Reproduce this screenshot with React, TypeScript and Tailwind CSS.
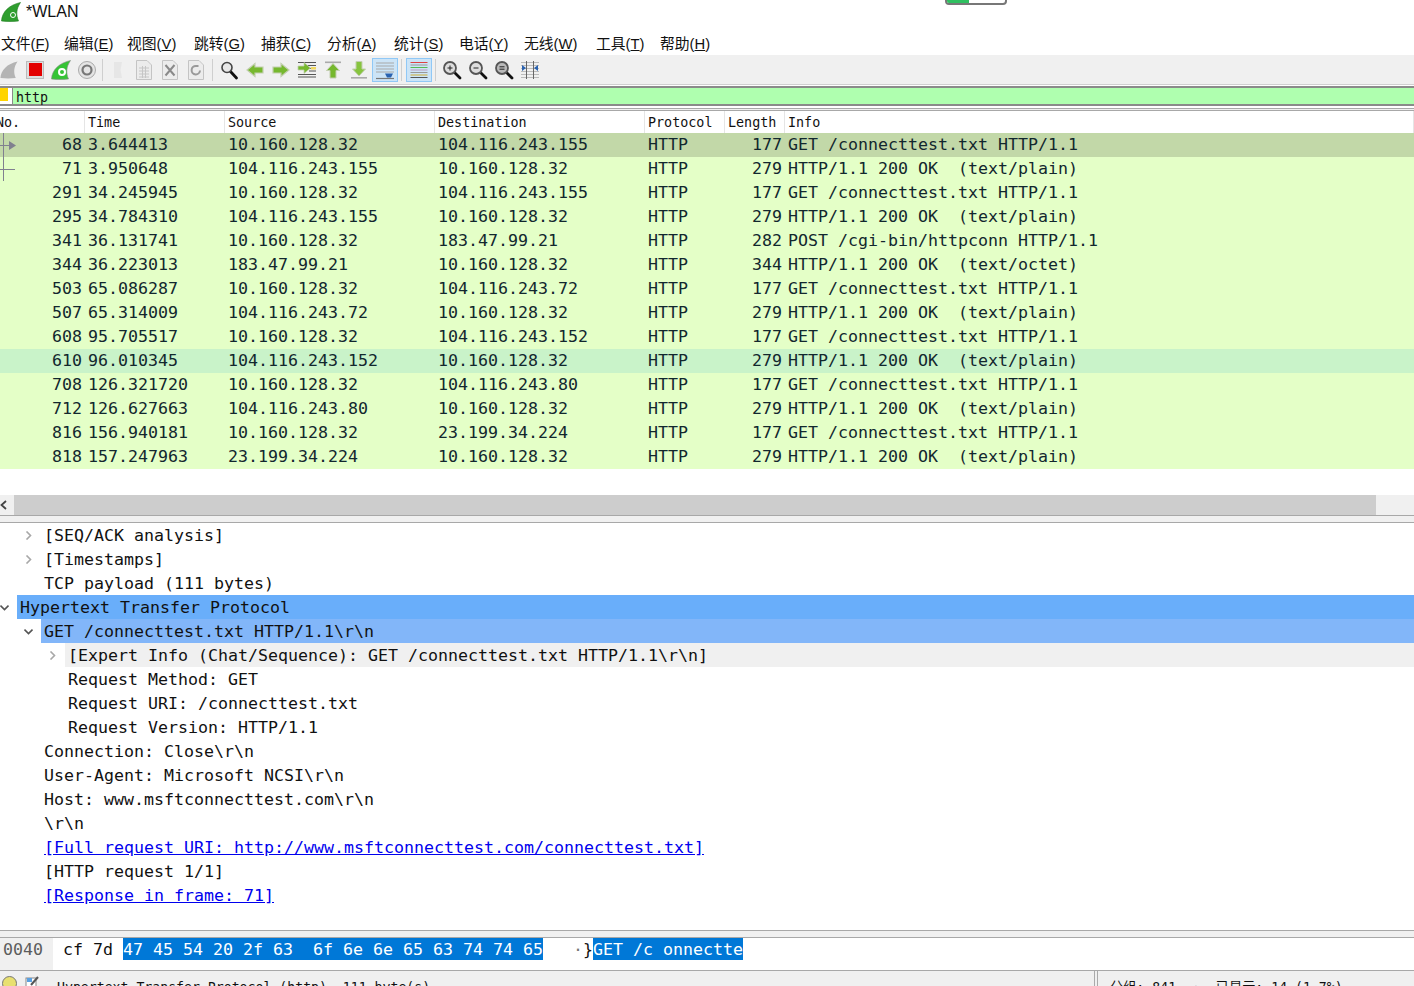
import type { ReactNode } from "react";

const mono = "font-['DejaVu_Sans_Mono','Liberation_Mono',monospace]";

const menus = [
  ["文件(", "F", 63],
  ["编辑(", "E", 63],
  ["视图(", "V", 67],
  ["跳转(", "G", 67],
  ["捕获(", "C", 66],
  ["分析(", "A", 67],
  ["统计(", "S", 65],
  ["电话(", "Y", 65],
  ["无线(", "W", 72],
  ["工具(", "T", 64],
  ["帮助(", "H", 60],
] as const;

const packets = [
  ["68", "3.644413", "10.160.128.32", "104.116.243.155", "177", "GET /connecttest.txt HTTP/1.1"],
  ["71", "3.950648", "104.116.243.155", "10.160.128.32", "279", "HTTP/1.1 200 OK  (text/plain)"],
  ["291", "34.245945", "10.160.128.32", "104.116.243.155", "177", "GET /connecttest.txt HTTP/1.1"],
  ["295", "34.784310", "104.116.243.155", "10.160.128.32", "279", "HTTP/1.1 200 OK  (text/plain)"],
  ["341", "36.131741", "10.160.128.32", "183.47.99.21", "282", "POST /cgi-bin/httpconn HTTP/1.1"],
  ["344", "36.223013", "183.47.99.21", "10.160.128.32", "344", "HTTP/1.1 200 OK  (text/octet)"],
  ["503", "65.086287", "10.160.128.32", "104.116.243.72", "177", "GET /connecttest.txt HTTP/1.1"],
  ["507", "65.314009", "104.116.243.72", "10.160.128.32", "279", "HTTP/1.1 200 OK  (text/plain)"],
  ["608", "95.705517", "10.160.128.32", "104.116.243.152", "177", "GET /connecttest.txt HTTP/1.1"],
  ["610", "96.010345", "104.116.243.152", "10.160.128.32", "279", "HTTP/1.1 200 OK  (text/plain)"],
  ["708", "126.321720", "10.160.128.32", "104.116.243.80", "177", "GET /connecttest.txt HTTP/1.1"],
  ["712", "126.627663", "104.116.243.80", "10.160.128.32", "279", "HTTP/1.1 200 OK  (text/plain)"],
  ["816", "156.940181", "10.160.128.32", "23.199.34.224", "177", "GET /connecttest.txt HTTP/1.1"],
  ["818", "157.247963", "23.199.34.224", "10.160.128.32", "279", "HTTP/1.1 200 OK  (text/plain)"],
];

const cols = "grid grid-cols-[85px_140px_210px_210px_80px_60px_1fr]";

function Shark({ fill, dark }: { fill: string; dark: string }) {
  return (
    <svg width="20" height="20" viewBox="0 0 20 20">
      <path d="M0.5 19 C1 10 8 3 19.5 0.5 C15 7 15 13 17.5 19 Q9 20 0.5 19 Z" fill={fill} stroke={dark} strokeWidth="0.6" />
    </svg>
  );
}

function Arrow({ dir, color = "#76b82e" }: { dir: "left" | "right"; color?: string }) {
  const rot = { right: 0, left: 180 }[dir];
  return (
    <g transform={`rotate(${rot} 10 10)`}>
      <path d="M2 7 H10 V3.5 L18 10 L10 16.5 V13 H2 Z" fill={color} stroke="#c3cfb0" strokeWidth="1.2" />
    </g>
  );
}

function Lens({ sign }: { sign: "+" | "-" | "=" }) {
  return (
    <svg width="20" height="20" viewBox="0 0 20 20" fill="none">
      <path d="M12 12 L18 18" stroke="#111" strokeWidth="2.8" strokeLinecap="round" />
      <circle cx="8" cy="8" r="6" fill={sign === "=" ? "#b9b9b9" : "#ddd"} stroke="#555" strokeWidth="1.8" />
      {sign === "+" && <path d="M5.5 8 H10.5 M8 5.5 V10.5" stroke="#222" strokeWidth="1" />}
      {sign === "-" && <path d="M5.5 8 H10.5" stroke="#222" strokeWidth="1" />}
      {sign === "=" && <path d="M5.5 6.8 H10.5 M5.5 9.2 H10.5" stroke="#222" strokeWidth="1" />}
    </svg>
  );
}

function Doc({ children }: { children: ReactNode }) {
  return (
    <svg width="20" height="20" viewBox="0 0 20 20" fill="none">
      <path d="M2.5 0.5 H13 L17.5 5 V19.5 H2.5 Z" fill="#ececec" stroke="#c4c4c4" />
      {children}
    </svg>
  );
}

function Tool({ children, on }: { children: ReactNode; on?: boolean }) {
  return (
    <div
      className={`flex h-[24px] w-[26px] shrink-0 items-center justify-center ${
        on ? "border border-[#90c8f6] bg-[#cce4f7]" : ""
      }`}
    >
      {children}
    </div>
  );
}

function Sep({ className }: { className: string }) {
  return <div className={`h-[22px] w-px shrink-0 bg-[#cfcfcf] ${className}`} />;
}

function Chevron({ open }: { open?: boolean }) {
  return (
    <svg width="9" height="9" viewBox="0 0 9 9" fill="none" stroke={open ? "#555" : "#a8a8a8"} strokeWidth="1.6">
      <path d={open ? "M0.5 2.5 L4.5 6.5 L8.5 2.5" : "M2.5 0.5 L6.5 4.5 L2.5 8.5"} />
    </svg>
  );
}

function Row({
  indent,
  chevron,
  open,
  bg,
  link,
  children,
}: {
  indent: number;
  chevron?: boolean;
  open?: boolean;
  bg?: string;
  link?: boolean;
  children: string;
}) {
  return (
    <div className="flex h-[24px] whitespace-pre leading-[24px]">
      <div className="flex shrink-0 items-center justify-end pr-[8px]" style={{ width: indent - 3 }}>
        {chevron && <Chevron open={open} />}
      </div>
      <div className={`flex-1 pl-[3px] pt-px ${bg ?? ""}`}>
        <span className={link ? "text-[#0000ee] underline" : ""}>{children}</span>
      </div>
    </div>
  );
}

export default function App() {
  return (
    <div className="relative h-[986px] w-[1414px] overflow-hidden bg-white text-[#111]">
      {/* 顶部露出的窗口角 */}
      <div className="absolute left-[945px] top-[-10px] h-[15px] w-[62px] overflow-hidden rounded-[4px] border-2 border-[#777] bg-white">
        <div className="h-full w-[22px] bg-[#2fc060]" />
      </div>

      {/* 标题栏 */}
      <div className="flex h-[24px] items-center pl-[1px] font-['Liberation_Sans',sans-serif] text-[16px]">
        <div className="relative h-[20px] w-[20px]">
          <Shark fill="#2f9e2f" dark="#1d7a1d" />
          <div className="absolute left-[9px] top-[10px] h-[6px] w-[6px] rounded-full border border-white" />
        </div>
        <span className="ml-[5px]">*WLAN</span>
      </div>

      {/* 菜单 */}
      <div className="flex h-[31px] items-end pb-px pl-px font-['Liberation_Sans','Noto_Sans_CJK_SC',sans-serif] text-[14.8px] leading-[20px]">
        {menus.map(([label, key, width]) => (
          <span key={key} className="shrink-0 whitespace-pre" style={{ width }}>
            {label}
            <span className="underline">{key}</span>)
          </span>
        ))}
      </div>

      {/* 工具栏 */}
      <div className="flex h-[30px] items-center border-b border-[#d0d0d0] bg-[#f0f0f0]">
        <div className="-ml-[4px] flex items-center">
          <Tool>
            <svg width="18" height="18" viewBox="0 0 20 20">
              <path d="M0.5 19 C1 10 8 3 19.5 0.5 C15 7 15 13 17.5 19 Q9 20 0.5 19 Z" fill="#b4b4b4" />
            </svg>
          </Tool>
          <Tool>
            <div className="flex h-[18px] w-[18px] items-center justify-center border border-[#bbb] bg-[#ddd]">
              <div className="h-[13px] w-[13px] bg-[#e30000]" />
            </div>
          </Tool>
          <Tool>
            <div className="relative h-[20px] w-[20px]">
              <Shark fill="#35c435" dark="#888" />
              <div className="absolute left-[7px] top-[8px] h-[8px] w-[8px] rounded-full border-2 border-white" />
            </div>
          </Tool>
          <Tool>
            <svg width="20" height="20" viewBox="0 0 20 20" fill="none">
              <circle cx="10" cy="10" r="8.5" fill="#e4e4e4" stroke="#aaa" />
              <circle cx="10" cy="10" r="4.5" stroke="#777" strokeWidth="2.2" />
            </svg>
          </Tool>
          <Sep className="mx-[2px]" />
          <Tool>
            <svg width="20" height="20" viewBox="0 0 20 20">
              <path d="M6 2 H14 L12.5 10 L14 18 H6 Z" fill="#e6e6e6" />
            </svg>
          </Tool>
          <Tool>
            <Doc>
              <path d="M5 8 H15 M5 11 H15 M5 14 H15 M5 17 H15 M8.5 6 V18 M11.5 6 V18" stroke="#c6c6c6" />
            </Doc>
          </Tool>
          <Tool>
            <Doc>
              <path d="M5.5 5 L14.5 15.5 M14.5 5 L5.5 15.5" stroke="#8a8a8a" strokeWidth="2" />
            </Doc>
          </Tool>
          <Tool>
            <Doc>
              <path d="M14 10.5 A4.2 4.2 0 1 1 10 6 L12.5 6" stroke="#9a9a9a" strokeWidth="2" />
            </Doc>
          </Tool>
          <Sep className="ml-[3px] mr-[3px]" />
          <Tool>
            <svg width="20" height="20" viewBox="0 0 20 20" fill="none">
              <path d="M11.5 11.5 L17.5 18" stroke="#111" strokeWidth="2.8" strokeLinecap="round" />
              <circle cx="8" cy="7.5" r="5" fill="#e8e8e8" stroke="#444" strokeWidth="1.6" />
            </svg>
          </Tool>
          <Tool>
            <svg width="20" height="20" viewBox="0 0 20 20">
              <Arrow dir="left" />
            </svg>
          </Tool>
          <Tool>
            <svg width="20" height="20" viewBox="0 0 20 20">
              <Arrow dir="right" />
            </svg>
          </Tool>
          <Tool>
            <svg width="20" height="20" viewBox="0 0 20 20">
              <path d="M1 2.5 H19 M9 5.5 H19 M12 8.5 H19 M12 11 H19 M1 14.5 H19 M1 17 H19" stroke="#555" strokeWidth="1" />
              <path d="M1 6 H7 V2.5 L13.5 8 L7 13.5 V10 H1 Z" fill="#76b82e" stroke="#c3cfb0" strokeWidth="0.8" />
              <rect x="14" y="7" width="5" height="2.5" fill="#f0d860" />
            </svg>
          </Tool>
          <Tool>
            <svg width="20" height="20" viewBox="0 0 20 20">
              <rect x="2" y="1.5" width="16" height="1.6" fill="#aaa" />
              <path d="M10 3.5 L16.5 10.5 H13 V18 H7 V10.5 H3.5 Z" fill="#76b82e" stroke="#c3cfb0" />
            </svg>
          </Tool>
          <Tool>
            <svg width="20" height="20" viewBox="0 0 20 20">
              <rect x="2" y="17" width="16" height="1.6" fill="#aaa" />
              <path d="M10 16 L3.5 9 H7 V1.5 H13 V9 H16.5 Z" fill="#86c43e" stroke="#c3cfb0" />
            </svg>
          </Tool>
          <Tool on>
            <svg width="20" height="20" viewBox="0 0 20 20">
              <path d="M1 3 H19 M1 6 H19 M1 9 H19 M1 12 H19" stroke="#a8a8a8" strokeWidth="1" />
              <path d="M1 18.5 H19" stroke="#777" strokeWidth="1.2" />
              <path d="M10 13.5 H18 L16 17.5 H12 Z" fill="#2a62b0" />
            </svg>
          </Tool>
          <Sep className="ml-[3px] mr-[4px]" />
          <Tool on>
            <svg width="20" height="20" viewBox="0 0 20 20">
              {["#d44", "#999", "#5b5", "#b9b", "#999", "#ca3", "#555"].map((c, i) => (
                <rect key={c + i} x="1.5" y={2 + i * 2.5} width="17" height="1" fill={c} />
              ))}
            </svg>
          </Tool>
          <Sep className="ml-[3px] mr-[3px]" />
          <Tool>
            <Lens sign="+" />
          </Tool>
          <Tool>
            <Lens sign="-" />
          </Tool>
          <Tool>
            <Lens sign="=" />
          </Tool>
          <Tool>
            <svg width="20" height="20" viewBox="0 0 20 20">
              <path d="M1 2.5 H19 M1 5.5 H19 M1 8.5 H19 M1 11.5 H19 M1 14.5 H19 M1 17.5 H19" stroke="#bbb" />
              <path d="M6.5 1 V19 M13.5 1 V19" stroke="#666" />
              <path d="M2 5 L6 8 L2 11 Z M18 5 L14 8 L18 11 Z" fill="#2a62b0" />
            </svg>
          </Tool>
        </div>
      </div>

      {/* 显示过滤器 */}
      <div className="mt-[1px] flex h-[20px] items-stretch border-y-2 border-[#8a8a8a] bg-[#afffaf]">
        <div className="w-[13px] border-r border-[#8a8a8a] bg-white">
          <div className="h-[13px] w-[8px] bg-[#ffd400]" />
        </div>
        <span className={`${mono} pl-[3px] pt-[2px] text-[13.3px] leading-[16px]`}>http</span>
      </div>
      <div className="mt-[2px] h-[3px] border-y border-[#a8a8a8] bg-[#f0f0f0]" />

      {/* 分组列表 */}
      <div className={`${cols} ${mono} h-[22px] text-[13.4px] leading-[24px]`}>
        {["No.", "Time", "Source", "Destination", "Protocol", "Length", "Info"].map((h, i) => (
          <div
            key={h}
            className={`overflow-hidden whitespace-pre border-r border-[#e5e5e5] ${i === 0 ? "-indent-[4px]" : "pl-[3px]"}`}
          >
            {h}
          </div>
        ))}
      </div>
      <div className={`${mono} relative text-[16.61px] leading-[24px] text-[#12272e]`}>
        {packets.map((p, i) => (
          <div
            key={p[0]}
            className={`${cols} h-[24px] whitespace-pre ${
              i === 0 ? "bg-[#c2d8a8]" : i === 9 ? "bg-[#c9f3c9]" : "bg-[#e4ffc7]"
            }`}
          >
            <div className="pr-[3px] text-right">{p[0]}</div>
            <div className="pl-[3px]">{p[1]}</div>
            <div className="pl-[3px]">{p[2]}</div>
            <div className="pl-[3px]">{p[3]}</div>
            <div className="pl-[3px]">HTTP</div>
            <div className="pr-[3px] text-right">{p[4]}</div>
            <div className="pl-[3px]">{p[5]}</div>
          </div>
        ))}
        {/* 关联分组标记 */}
        <svg className="absolute left-0 top-0" width="20" height="48" viewBox="0 0 20 48">
          <path d="M3.5 0 V48 M0 12.5 H9 M0 36.5 H15" stroke="#80808f" strokeWidth="1" fill="none" />
          <path d="M9 8 L16 12.5 L9 17 Z" fill="#80808f" />
        </svg>
      </div>

      {/* 水平滚动条 */}
      <div className="mt-[26px] flex h-[20px] bg-[#cdcdcd]">
        <div className="flex w-[14px] items-center bg-[#f0f0f0]">
          <svg width="8" height="10" viewBox="0 0 8 10" fill="none" stroke="#444" strokeWidth="1.8">
            <path d="M6 1 L1.5 5 L6 9" />
          </svg>
        </div>
        <div className="flex-1" />
        <div className="w-[38px] bg-[#f0f0f0]" />
      </div>
      <div className="h-[8px] border-y border-[#a8a8a8] bg-[#f0f0f0]" />

      {/* 分组详情 */}
      <div className={`${mono} h-[407px] text-[16.61px] text-[#111]`}>
        <Row indent={44} chevron>
          [SEQ/ACK analysis]
        </Row>
        <Row indent={44} chevron>
          [Timestamps]
        </Row>
        <Row indent={44}>TCP payload (111 bytes)</Row>
        <Row indent={20} chevron open bg="bg-[#69aefa]">
          Hypertext Transfer Protocol
        </Row>
        <Row indent={44} chevron open bg="bg-[#82b6f9]">
          {"GET /connecttest.txt HTTP/1.1\\r\\n"}
        </Row>
        <Row indent={68} chevron bg="bg-[#f0f0f0]">
          {"[Expert Info (Chat/Sequence): GET /connecttest.txt HTTP/1.1\\r\\n]"}
        </Row>
        <Row indent={68}>Request Method: GET</Row>
        <Row indent={68}>Request URI: /connecttest.txt</Row>
        <Row indent={68}>Request Version: HTTP/1.1</Row>
        <Row indent={44}>{"Connection: Close\\r\\n"}</Row>
        <Row indent={44}>{"User-Agent: Microsoft NCSI\\r\\n"}</Row>
        <Row indent={44}>{"Host: www.msftconnecttest.com\\r\\n"}</Row>
        <Row indent={44}>{"\\r\\n"}</Row>
        <Row indent={44} link>
          [Full request URI: http://www.msftconnecttest.com/connecttest.txt]
        </Row>
        <Row indent={44}>[HTTP request 1/1]</Row>
        <Row indent={44} link>
          [Response in frame: 71]
        </Row>
      </div>

      {/* 字节窗格 */}
      <div className="h-[8px] border-y border-[#a8a8a8] bg-[#f0f0f0]" />
      <div className={`${mono} flex h-[33px] whitespace-pre border-b border-[#a8a8a8] text-[16.61px] leading-[24px]`}>
        <div className="w-[53px] bg-[#f0f0f0] pl-[3px] text-[#5c5c5c]">0040</div>
        <div className="w-[70px] pl-[10px]">cf 7d</div>
        <div className="h-[22px] w-[420px] bg-[#0078d7] text-white">47 45 54 20 2f 63  6f 6e 6e 65 63 74 74 65</div>
        <div className="w-[50px] text-right text-[#777]">
          ·<span className="text-[#111]">{"}"}</span>
        </div>
        <div className="h-[22px] w-[150px] bg-[#0078d7] text-white">GET /c onnectte</div>
      </div>

      {/* 状态栏 */}
      <div className="relative flex h-[20px] items-start bg-[#f0f0f0]">
        <div className="ml-[2px] mt-[5px] h-[15px] w-[15px] rounded-full border border-[#777] bg-[#e8e070]" />
        <svg className="ml-[8px] mt-[4px]" width="15" height="15" viewBox="0 0 15 15">
          <rect x="1" y="3" width="10" height="11" fill="#fff" stroke="#888" />
          <rect x="2" y="3" width="5" height="4" fill="#5aa0e0" />
          <path d="M6 10 L13 2" stroke="#555" strokeWidth="2" />
        </svg>
        <span className={`${mono} ml-[17px] mt-[8px] whitespace-pre text-[13.2px] leading-[18px]`}>
          Hypertext Transfer Protocol (http), 111 byte(s)
        </span>
        <div className="absolute left-[1094px] top-0 h-[16px] w-[4px] border-x border-[#aaa]" />
        <span className="absolute left-[1110px] top-[8px] whitespace-pre font-['DejaVu_Sans_Mono','Noto_Sans_CJK_SC',monospace] text-[13.2px] leading-[18px]">
          分组: 841  ·  已显示: 14 (1.7%)
        </span>
      </div>
    </div>
  );
}
